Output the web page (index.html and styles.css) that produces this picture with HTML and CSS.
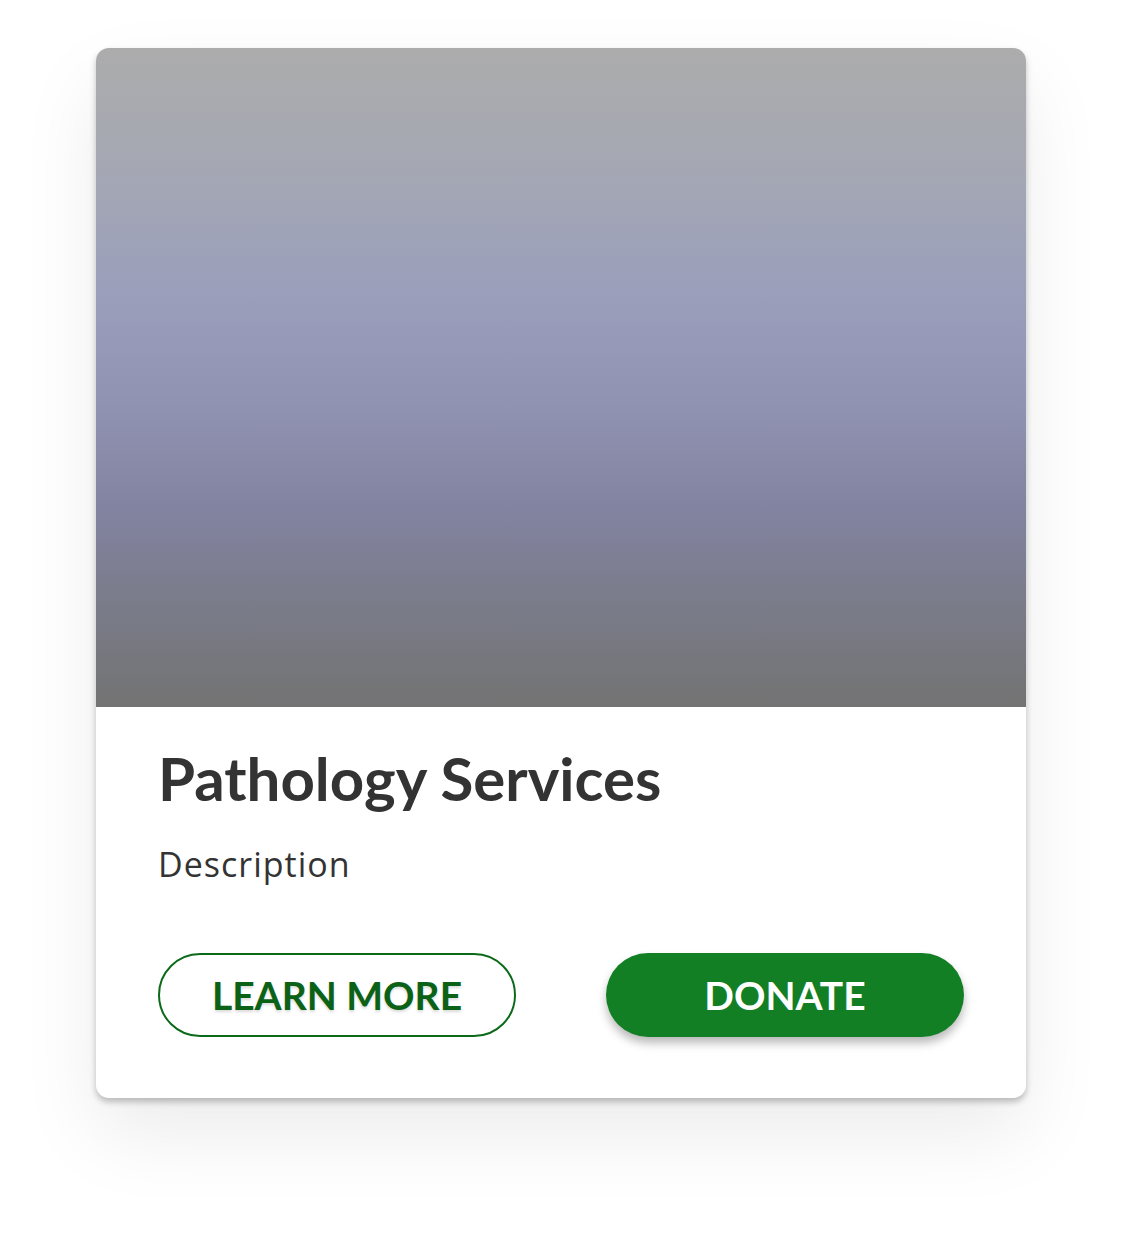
FILE: index.html
```html
<!DOCTYPE html>
<html>
<head>
<meta charset="utf-8">
<link rel="stylesheet" href="styles.css">
</head>
<body>
<div class="page">
  <div class="card">
    <div class="card-image"></div>
    <div class="card-body">
      <h2 class="card-title">Pathology Services</h2>
      <p class="card-desc">Description</p>
      <div class="card-actions">
        <button class="btn btn-outline">LEARN MORE</button>
        <button class="btn btn-solid">DONATE</button>
      </div>
    </div>
  </div>
</div>
</body>
</html>
```
FILE: styles.css
```css
html, body {
  margin: 0;
  padding: 0;
  background: #ffffff;
}
.page {
  padding: 48px 96px;
  min-height: 1242px;
  box-sizing: border-box;
}
.card {
  width: 930px;
  background: #ffffff;
  border-radius: 13px;
  overflow: hidden;
  box-shadow: 0 4px 6px rgba(0,0,0,0.24), 0 36px 80px rgba(0,0,0,0.08);
}
.card-image {
  height: 659px;
  background: linear-gradient(to bottom, #acacac 0%, #a4a7b4 20%, #9a9ebb 38%, #9092b1 55%, #8283a0 70%, #7a7c8a 84%, #737373 100%);
}
.card-body {
  padding: 35px 62px 61px 62px;
}
.card-title {
  margin: 0;
  font-family: Lato, "Liberation Sans", sans-serif;
  font-weight: 700;
  font-size: 60px;
  line-height: 72px;
  color: #333333;
}
.card-desc {
  margin: 28px 0 0 0;
  font-family: "Open Sans", "Liberation Sans", sans-serif;
  font-size: 34px;
  line-height: 44px;
  letter-spacing: 1px;
  color: #333333;
}
.card-actions {
  margin-top: 67px;
  display: flex;
  justify-content: space-between;
}
.btn {
  width: 358px;
  height: 84px;
  border-radius: 42px;
  font-family: Lato, "Liberation Sans", sans-serif;
  font-size: 39px;
  font-weight: 700;
  padding: 0;
  box-sizing: border-box;
  cursor: pointer;
}
.btn-outline {
  background: #ffffff;
  border: 2px solid #0b6a19;
  color: #0b6216;
  text-shadow: 0 2px 3px rgba(0,0,0,0.15);
}
.btn-solid {
  background: #137f24;
  border: none;
  color: #ffffff;
  box-shadow: 0 6px 10px rgba(0,0,0,0.28);
}
```
